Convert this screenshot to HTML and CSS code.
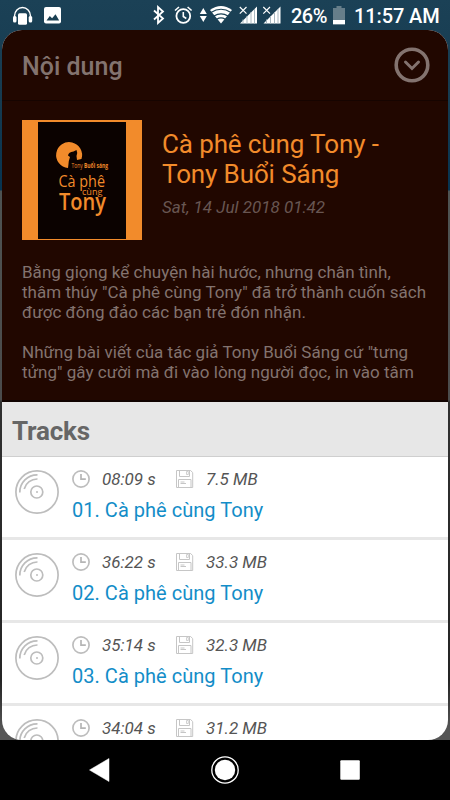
FILE: index.html
```html
<!DOCTYPE html>
<html lang="vi">
<head>
<meta charset="utf-8">
<meta name="viewport" content="width=device-width">
<title>Cà phê cùng Tony</title>
<link rel="stylesheet" href="styles.css">
</head>
<body>
<svg class="defs" aria-hidden="true">
  <symbol id="disc" viewBox="0 0 44 44"><g fill="none" stroke="#bdbdbd" stroke-width="1.7"><circle cx="22" cy="22" r="21.1"/><circle cx="21.800" cy="22" r="6"/><path d="M4.800 22.500A17.400 17.400 0 0 1 22.500 4.800M9.200 19A13.400 13.400 0 0 1 22.500 9"/></g><circle cx="22" cy="22" r="1" fill="#bdbdbd"/></symbol>
  <symbol id="clock" viewBox="0 0 18 18"><circle cx="9" cy="9" r="8.100" fill="none" stroke="#bdbdbd" stroke-width="1.700"/><path d="M9 4v5.200h4.800" fill="none" stroke="#b5b5b5" stroke-width="1.700"/></symbol>
  <symbol id="disk" viewBox="0 0 18 18"><g fill="none" stroke="#c6c6c6" stroke-width="1"><path d="M.5.5h14.200l2 2.200v14.800H.5zM3.500.8v5.700h10V.8M2.500 17V9.500h12.500V17M4.500 12h4M4.500 13.500h5.500"/><path d="M10.500 1.500h1.800v3h-1.800z" stroke-width=".8"/></g></symbol>
</svg>
<div class="screen">
  <header class="status">
    <svg class="status-icons" width="290" height="30" viewBox="0 0 290 30">
      <path d="M14.500 19v-3a8 8.500 0 0 1 16 0v3" fill="none" stroke="#fff" stroke-width="1.400"/>
      <rect x="13" y="16" width="3.500" height="6.500" rx="1.500" fill="#fff"/><rect x="28.700" y="16" width="3.500" height="6.500" rx="1.500" fill="#fff"/><rect x="18" y="13.300" width="9" height="11.500" rx="1.500" fill="#fff"/>
      <rect x="44" y="7" width="17" height="16.500" rx="2" fill="#fff"/><path d="M46.500 20.500l3.300-4.500 2.300 2.200 3.400-4 3.700 6.300z" fill="#1b4053"/>
      <path d="M154 10.500l9 8-5 4.500V7l5 4.500-9 8" fill="none" stroke="#fff" stroke-width="1.800"/>
      <circle cx="183.300" cy="16" r="6.900" fill="none" stroke="#fff" stroke-width="1.800"/><path d="M183.300 12v4.500l3 2M175 10.500l4-3.500M187.600 7l4 3.500" fill="none" stroke="#fff" stroke-width="1.600"/>
      <path d="M203.300 8l3.500 6h-7zM203.300 22l3.500-6h-7z" fill="#fff"/>
      <path d="M221 23.500L210 10q11-8.200 22 0z" fill="#fff"/><path d="M211 12.600q10-6.700 20 0M214 16q7-4.400 14 0M216.700 19.200q4.300-2.500 8.600 0" fill="none" stroke="#1b4053" stroke-width="1.200"/>
      <g id="signal"><path d="M240 23.500L257 6.500v17z" fill="#fff"/><path d="M243 19.500v4M247 16v7.500M251 12v11.500M254.500 9v14.500" stroke="#a9b8c0" stroke-width="1"/><path d="M239.800 7l6.700 6.700M246.500 7l-6.700 6.700" stroke="#fff" stroke-width="1.200"/></g>
      <use href="#signal" x="23.500"/>
    </svg>
    <span class="percent">26%</span>
    <svg class="battery" width="12" height="19" viewBox="0 0 12 19"><path d="M1 2h2.500V0h5v2H12v16.300H0V2z" fill="#667e8a"/><path d="M0 14h12v4.300H0z" fill="#fff"/></svg>
    <span class="time">11:57 AM</span>
  </header>
  <main class="panel">
    <div class="head"><h1>Nội dung</h1>
      <svg width="36" height="36" viewBox="0 0 36 36" fill="none" stroke="#83736f"><circle cx="18" cy="18" r="15.800" stroke-width="3.600"/><path d="M11.500 15l6.500 6.500 6.500-6.500" stroke-width="3" stroke-linecap="round"/></svg>
    </div>
    <section class="info">
      <div class="book">
        <div class="cover">
          <svg width="88" height="117" viewBox="0 0 88 117">
            <path d="M30 46A13 13 0 1 1 43.500 37L39 38l-.5-4q1.500-3 0-6l-3 1.500q-5 .5-5.500 4l2 1.500q-1.500 4-1.500 7z" fill="#f28b2b"/>
            <g fill="#f28b2b" font-family="Open Sans, sans-serif"><text x="33.500" y="45.500" font-size="6.200" textLength="36.500" lengthAdjust="spacingAndGlyphs">Tony <tspan font-weight="bold">Buổi sáng</tspan></text><text x="20.500" y="65" font-size="16.500" textLength="46.500" lengthAdjust="spacingAndGlyphs">Cà phê</text><text x="44" y="73" font-size="9.500" textLength="20.500" lengthAdjust="spacingAndGlyphs">cùng</text><text x="21" y="88" font-size="22.500" font-weight="600" textLength="47" lengthAdjust="spacingAndGlyphs">Tony</text></g>
          </svg>
        </div>
        <div class="meta"><h2>Cà phê cùng Tony -<br>Tony Buổi Sáng</h2><p class="date">Sat, 14 Jul 2018 01:42</p></div>
      </div>
      <p class="text">Bằng giọng kể chuyện hài hước, nhưng chân tình,<br>thâm thúy "Cà phê cùng Tony" đã trở thành cuốn sách<br>được đông đảo các bạn trẻ đón nhận.</p>
      <p class="text">Những bài viết của tác giả Tony Buổi Sáng cứ "tưng<br>tửng" gây cười mà đi vào lòng người đọc, in vào tâm</p>
    </section>
    <h2 class="tracks-title">Tracks</h2>
    <ul class="tracks">
      <li><svg class="disc"><use href="#disc"/></svg><div><p class="stats"><svg class="small"><use href="#clock"/></svg><span class="length">08:09 s</span><svg class="small"><use href="#disk"/></svg><span>7.5 MB</span></p><p class="name">01. Cà phê cùng Tony</p></div></li>
      <li><svg class="disc"><use href="#disc"/></svg><div><p class="stats"><svg class="small"><use href="#clock"/></svg><span class="length">36:22 s</span><svg class="small"><use href="#disk"/></svg><span>33.3 MB</span></p><p class="name">02. Cà phê cùng Tony</p></div></li>
      <li><svg class="disc"><use href="#disc"/></svg><div><p class="stats"><svg class="small"><use href="#clock"/></svg><span class="length">35:14 s</span><svg class="small"><use href="#disk"/></svg><span>32.3 MB</span></p><p class="name">03. Cà phê cùng Tony</p></div></li>
      <li><svg class="disc"><use href="#disc"/></svg><div><p class="stats"><svg class="small"><use href="#clock"/></svg><span class="length">34:04 s</span><svg class="small"><use href="#disk"/></svg><span>31.2 MB</span></p></div></li>
    </ul>
  </main>
  <nav class="nav">
    <svg width="28" height="28" viewBox="0 0 28 28"><path d="M23 2.500v23L3.500 14z" fill="#fff" stroke="#fff" stroke-linejoin="round" stroke-width=".5"/></svg>
    <svg width="28" height="28" viewBox="0 0 28 28"><circle cx="14" cy="14" r="13.200" fill="none" stroke="#fff" stroke-width="1.300"/><circle cx="14" cy="14" r="10.200" fill="#fff"/></svg>
    <svg width="28" height="28" viewBox="0 0 28 28"><rect x="4.300" y="4.300" width="19.500" height="19.500" rx="1" fill="#fff"/></svg>
  </nav>
</div>
</body>
</html>
```

FILE: styles.css
```css
* { box-sizing: border-box; }
body { margin: 0; font-family: Roboto, sans-serif; }
h1, h2, p, ul { margin: 0; padding: 0; }
svg { display: block; flex: none; }
.defs { position: absolute; width: 0; height: 0; }
.screen { width: 450px; height: 800px; overflow: hidden; display: flex; flex-direction: column; background: linear-gradient(#1b4156 0, #163b50 100px, #073451 190px, #4e5352 191px, #4b4b4b 400px, #303030 402px, #242424 680px, #565656 730px); }
.status { height: 30px; flex: none; display: flex; align-items: center; color: #fff; font-size: 20px; font-weight: 500; white-space: nowrap; }
.percent { width: 42px; margin-left: 1px; padding-top: 1px; letter-spacing: -.5px; }
.battery { margin-right: 9px; }
.time { width: 95px; padding-top: 1px; letter-spacing: -.1px; }
.panel { width: 446px; height: 710px; margin-left: 2px; flex: none; border-radius: 20px; overflow: hidden; background: #fff; }
.head { height: 71px; padding: 0 18px 0 20px; display: flex; align-items: center; justify-content: space-between; background: #210700; border-bottom: 1px solid #160400; }
h1 { padding-top: 3px; font-size: 25px; font-weight: 500; color: #83736f; line-height: 30px; }
.info { height: 301px; padding: 19px 20px 0; background: #210700; border-bottom: 2px solid #110300; color: #83736f; }
.book { display: flex; gap: 20px; height: 120px; margin-bottom: 22px; }
.cover { width: 120px; height: 120px; padding: 2px 16px 1px; background: #f28b2b; }
.cover svg { background: #0b0200; }
.meta { padding-top: 9px; white-space: nowrap; }
.meta h2 { font-size: 26px; font-weight: 400; line-height: 30px; letter-spacing: -.12px; color: #f28b2b; }
.date { margin-top: 8px; font-size: 17px; line-height: 20px; font-style: italic; color: #685652; }
.text { margin-bottom: 20px; font-size: 17px; line-height: 20px; letter-spacing: .02px; white-space: nowrap; }
.tracks-title { height: 55px; padding-left: 10px; background: #e7e7e7; color: #666; border-bottom: 1px solid #cfcfcf; font-size: 26px; line-height: 58px; font-weight: 700; letter-spacing: -.2px; }
.tracks { list-style: none; }
.tracks li { display: flex; gap: 13px; height: 83px; padding: 13px 13px 0; border-bottom: 3px solid #e7e7e7; }
.disc { width: 44px; height: 44px; }
.stats { height: 18px; display: flex; align-items: center; color: #555; font-size: 17px; font-style: italic; white-space: nowrap; }
.small { width: 18px; height: 18px; margin-right: 12px; }
.length { width: 74px; }
.name { margin-top: 7px; color: #138dc8; font-size: 20px; line-height: 30px; letter-spacing: .03px; }
.nav { height: 60px; flex: none; background: #000; display: flex; align-items: center; justify-content: center; gap: 97px; }
```
